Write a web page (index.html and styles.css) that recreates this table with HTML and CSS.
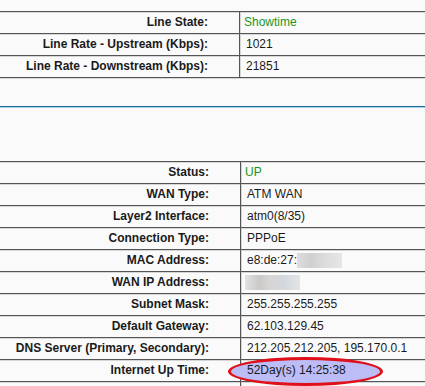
FILE: index.html
```html
<!DOCTYPE html>
<html>
<head>
<meta charset="utf-8">
<link rel="stylesheet" href="styles.css">
</head>
<body>
<div class="page">
  <div class="tbl t1">
    <div class="row"><div class="lbl">Line State:</div><div class="val ok">Showtime</div></div>
    <div class="row"><div class="lbl">Line Rate - Upstream (Kbps):</div><div class="val">1021</div></div>
    <div class="row"><div class="lbl">Line Rate - Downstream (Kbps):</div><div class="val">21851</div></div>
  </div>
  <div class="sep"></div>
  <div class="tbl t2">
    <div class="row"><div class="lbl">Status:</div><div class="val ok">UP</div></div>
    <div class="row"><div class="lbl">WAN Type:</div><div class="val">ATM WAN</div></div>
    <div class="row"><div class="lbl">Layer2 Interface:</div><div class="val">atm0(8/35)</div></div>
    <div class="row"><div class="lbl">Connection Type:</div><div class="val">PPPoE</div></div>
    <div class="row"><div class="lbl">MAC Address:</div><div class="val">e8:de:27:<span class="blur b1"></span></div></div>
    <div class="row"><div class="lbl">WAN IP Address:</div><div class="val"><span class="blur b2"></span></div></div>
    <div class="row"><div class="lbl">Subnet Mask:</div><div class="val">255.255.255.255</div></div>
    <div class="row"><div class="lbl">Default Gateway:</div><div class="val">62.103.129.45</div></div>
    <div class="row"><div class="lbl">DNS Server (Primary, Secondary):</div><div class="val">212.205.212.205, 195.170.0.1</div></div>
    <div class="row"><div class="lbl">Internet Up Time:</div><div class="val"><span class="mark">52Day(s) 14:25:38</span></div></div>
    <div class="row"><div class="lbl"></div><div class="val"></div></div>
  </div>
</div>
</body>
</html>
```

FILE: styles.css
```css
html, body {
  margin: 0;
  padding: 0;
  background: #fafafa;
}
.page {
  width: 425px;
  height: 386px;
  overflow: hidden;
  font-family: "Liberation Sans", Arial, sans-serif;
  font-size: 12px;
  color: #1a1a1a;
}
.t1 {
  margin-top: 11px;
}
.tbl {
  border-bottom: 1px solid #555;
  box-shadow: 0 1px 0 #d6d6d6;
}
.row {
  display: grid;
  grid-template-columns: 240px 1fr;
  height: 21px;
  border-top: 1px solid #555;
  box-shadow: inset 0 1px 0 #d6d6d6;
}
.t2 .row {
  grid-template-columns: 241px 1fr;
}
.lbl {
  font-weight: bold;
  text-align: right;
  padding-right: 31px;
  line-height: 21px;
  border-right: 1px solid #555;
  box-shadow: 1px 0 0 #d6d6d6;
}
.val {
  padding-left: 6px;
  line-height: 21px;
  white-space: nowrap;
  position: relative;
}
.ok {
  color: #1c961c;
  padding-left: 4px;
}
.blur {
  display: inline-block;
  vertical-align: middle;
  height: 15px;
  background: linear-gradient(90deg, #dedede, #cfcfcf 30%, #dcdcdc 60%, #e6e6e6);
}
.b1 { width: 45px; }
.b2 { width: 55px; margin-left: -2px; background: linear-gradient(90deg, #e2e2e2, #cacaca 25%, #d8d5d3 45%, #d3d8de 70%, #e4e4e4); }
.mark {
  position: relative;
  z-index: 0;
}
.mark::before {
  content: "";
  position: absolute;
  z-index: -1;
  left: -19px;
  top: -6px;
  width: 149px;
  height: 23px;
  border: 3px solid #e0101a;
  border-radius: 50%;
  background: #bcbcf6;
}
.sep {
  height: 28px;
  border-bottom: 1px solid #1d6b96;
  box-shadow: 0 1px 0 #a9d0e4;
  margin-bottom: 54px;
}
```
